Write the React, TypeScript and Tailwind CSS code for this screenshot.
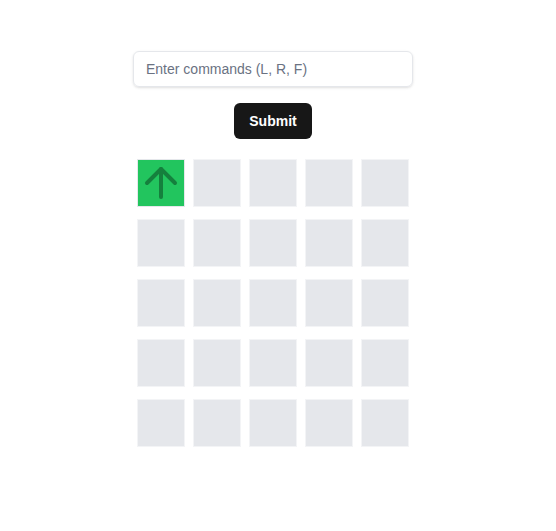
import { ArrowUp } from "lucide-react";

export default function App() {
  const cells = Array.from({ length: 25 }, (_, i) => i);

  return (
    <div
      className="flex flex-col items-center min-h-screen bg-white pt-[51px] pr-[10px]"
      style={{ fontFamily: "'Liberation Sans', Arial, sans-serif" }}
    >
      <input
        type="text"
        placeholder="Enter commands (L, R, F)"
        className="w-[280px] h-9 px-3 text-sm rounded-md border border-gray-200 shadow-sm placeholder:text-gray-500 outline-none"
      />
      <button className="mt-4 h-9 px-[15px] rounded-md bg-[#171717] text-white text-sm font-bold">
        Submit
      </button>
      <div className="mt-5 grid grid-cols-5 gap-x-2 gap-y-3">
        {cells.map((i) => (
          <div
            key={i}
            className={
              i === 0
                ? "w-12 h-12 flex items-center justify-center overflow-hidden bg-[#22c55e] border border-gray-200"
                : "w-12 h-12 bg-gray-200 border border-gray-100"
            }
          >
            {i === 0 && <ArrowUp size={48} strokeWidth={2} className="shrink-0 text-[#15803d]" />}
          </div>
        ))}
      </div>
    </div>
  );
}
